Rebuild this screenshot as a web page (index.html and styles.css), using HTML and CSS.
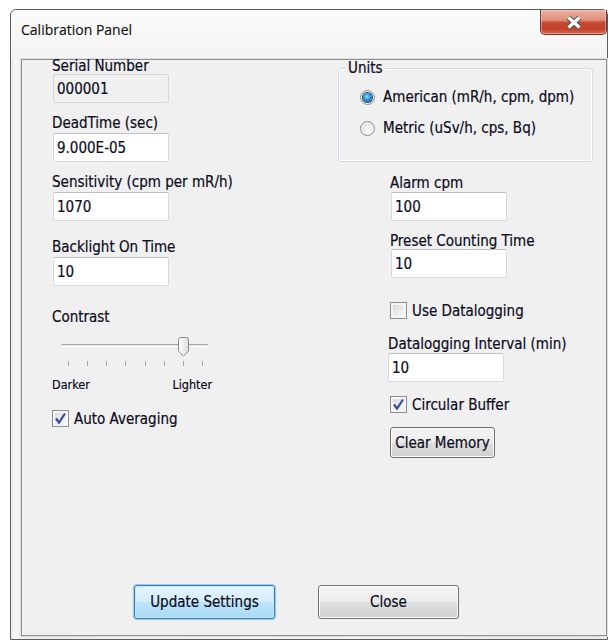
FILE: index.html
```html
<!DOCTYPE html>
<html>
<head>
<meta charset="utf-8">
<title>Calibration Panel</title>
<link rel="stylesheet" href="styles.css">
</head>
<body>
<div class="window">
  <div class="titlebar">
    <span class="title">Calibration Panel</span>
    <button class="close-x" type="button" aria-label="Close window">
      <svg width="20" height="15" viewBox="0 0 20 15">
        <path d="M4.5 2.5 L15.5 12.5 M15.5 2.5 L4.5 12.5" stroke="#4e4e4e" stroke-width="5.2" fill="none"/>
        <path d="M4.5 2.5 L15.5 12.5 M15.5 2.5 L4.5 12.5" stroke="#ffffff" stroke-width="3.2" fill="none"/>
      </svg>
    </button>
  </div>

  <div class="client">
    <div class="columns">
      <!-- left column: device settings -->
      <div class="col col-left">
        <div class="field f-serial">
          <label class="lbl">Serial Number</label>
          <input class="txt disabled" type="text" value="000001" readonly>
        </div>
        <div class="field f-dead">
          <label class="lbl">DeadTime (sec)</label>
          <input class="txt" type="text" value="9.000E-05">
        </div>
        <div class="field f-sens">
          <label class="lbl">Sensitivity (cpm per mR/h)</label>
          <input class="txt" type="text" value="1070">
        </div>
        <div class="field f-back">
          <label class="lbl">Backlight On Time</label>
          <input class="txt" type="text" value="10">
        </div>

        <div class="lbl contrast">Contrast</div>
        <div class="slider">
          <div class="track"></div>
          <svg class="thumb" width="11" height="20" viewBox="0 0 11 20">
            <defs>
              <linearGradient id="thumbFill" x1="0" y1="0" x2="1" y2="0">
                <stop offset="0" stop-color="#ffffff"/>
                <stop offset="1" stop-color="#dcdcdc"/>
              </linearGradient>
            </defs>
            <path d="M0.5 2.5 A2 2 0 0 1 2.5 0.5 H8.5 A2 2 0 0 1 10.5 2.5 V14 L5.5 19.2 L0.5 14 Z" fill="url(#thumbFill)" stroke="#8a8a8a"/>
          </svg>
          <div class="ticks"><i></i><i></i><i></i><i></i><i></i><i></i><i></i><i></i></div>
        </div>
        <div class="scale-labels"><span>Darker</span><span>Lighter</span></div>

        <label class="check-row cb-auto">
          <span class="check">
            <svg width="13" height="13" viewBox="0 0 13 13"><path d="M2 6.5 L5 10.5 L11 1.5" stroke="#3a4c9e" stroke-width="2.2" fill="none"/></svg>
          </span>
          <span>Auto Averaging</span>
        </label>
      </div>

      <!-- right column: units, alarm and logging -->
      <div class="col col-right">
        <fieldset class="group">
          <legend>Units</legend>
          <div class="radios">
            <label class="radio-row"><span class="radio on"></span><span>American (mR/h, cpm, dpm)</span></label>
            <label class="radio-row"><span class="radio"></span><span>Metric (uSv/h, cps, Bq)</span></label>
          </div>
        </fieldset>

        <div class="field f-alarm">
          <label class="lbl">Alarm cpm</label>
          <input class="txt" type="text" value="100">
        </div>
        <div class="field f-preset">
          <label class="lbl">Preset Counting Time</label>
          <input class="txt" type="text" value="10">
        </div>

        <label class="check-row cb-datalog">
          <span class="check"></span>
          <span>Use Datalogging</span>
        </label>

        <div class="field f-interval">
          <label class="lbl">Datalogging Interval (min)</label>
          <input class="txt" type="text" value="10">
        </div>

        <label class="check-row cb-circular">
          <span class="check">
            <svg width="13" height="13" viewBox="0 0 13 13"><path d="M2 6.5 L5 10.5 L11 1.5" stroke="#3a4c9e" stroke-width="2.2" fill="none"/></svg>
          </span>
          <span>Circular Buffer</span>
        </label>

        <button class="btn btn-clear" type="button">Clear Memory</button>
      </div>
    </div>

    <div class="actions">
      <button class="btn btn-wide default" type="button">Update Settings</button>
      <button class="btn btn-wide" type="button">Close</button>
    </div>
  </div>
</div>
</body>
</html>
```
FILE: styles.css
```css
* { box-sizing: border-box; }

html, body {
  margin: 0;
  padding: 0;
}

body {
  width: 608px;
  height: 640px;
  overflow: hidden;
  background: #ffffff;
  font-family: "DejaVu Sans Condensed", "DejaVu Sans", sans-serif;
  font-stretch: condensed;
  font-size: 15px;
  color: #0c0c1c;
  -webkit-text-stroke: 0.2px #0c0c1c;
}

/* window frame */
.window {
  margin: 9px 0 0 10px;
  width: 598px;
  height: 631px;
  border: 1px solid #5e5e5e;
  border-radius: 6px 6px 0 0;
  background: linear-gradient(90deg, #e9e9e9 0, #f7f7f7 4px, #eeeeee 10px, #f3f3f3 50%, #ececec 100%);
  display: flex;
  flex-direction: column;
}

.titlebar {
  height: 49px;
  flex: none;
  display: flex;
  justify-content: space-between;
  align-items: flex-start;
  background: linear-gradient(#fbfbfb, #f4f4f4);
  border-radius: 6px 6px 0 0;
}

.title {
  font-family: "Open Sans", sans-serif;
  font-stretch: normal;
  font-size: 14px;
  line-height: 16px;
  padding: 12px 0 0 10px;
  color: #111111;
  -webkit-text-stroke: 0.15px #111111;
}

.close-x {
  width: 67px;
  height: 25px;
  padding: 0;
  margin: 0;
  border: 1px solid #7d3427;
  border-top: none;
  border-radius: 0 0 5px 5px;
  background: linear-gradient(#ebb1a4 0%, #df8f7c 42%, #c94a33 52%, #c2402a 78%, #d8694e 100%);
  box-shadow: inset 0 0 0 1px rgba(255, 220, 210, 0.45);
  display: flex;
  align-items: center;
  justify-content: center;
}

/* client area */
.client {
  margin-left: 10px;
  width: 586px;
  height: 577px;
  flex: none;
  border: 1px solid #8f8f8f;
  box-shadow: 0 0 0 1px #dedede;
  background: #f0f0f0;
  display: flex;
  flex-direction: column;
}

.columns {
  display: flex;
  padding-left: 30px;
}

.col {
  display: flex;
  flex-direction: column;
  align-items: flex-start;
}

.col-left { width: 286px; }
.col-right { width: 255px; }

/* labels and text boxes */
.lbl {
  display: block;
  height: 16px;
  line-height: 16px;
  white-space: nowrap;
}

.field {
  display: flex;
  flex-direction: column;
  align-items: flex-start;
}

.txt {
  display: block;
  width: 116px;
  height: 29px;
  margin: 0 0 0 1px;
  padding: 0 0 0 3px;
  font: inherit;
  font-stretch: condensed;
  color: #0c0c1c;
  background: #ffffff;
  border: 1px solid #d6dae0;
  border-top-color: #bcc0c6;
  border-radius: 2px;
  outline: none;
}

.txt.disabled {
  background: #f0f0f0;
  border-color: #d9d9d9;
}

.f-serial { margin-top: -2px; }
.f-dead { margin-top: 12px; }
.f-sens { margin-top: 12px; }
.f-back { margin-top: 18px; }
.f-dead .txt,
.f-sens .txt,
.f-back .txt { margin-top: 2px; }

.contrast { margin-top: 23px; }

/* trackbar */
.slider {
  position: relative;
  margin: 19px 0 0 9px;
  width: 147px;
}

.track {
  height: 3px;
  border-top: 1px solid #a7a7a7;
  border-bottom: 1px solid #ffffff;
  background: #e3e3e3;
  border-radius: 1px;
}

.thumb {
  position: absolute;
  left: 117px;
  top: -7px;
}

.ticks {
  margin: 14px 0 0 7px;
  width: 135px;
  height: 5px;
  display: flex;
  justify-content: space-between;
}

.ticks i {
  width: 1px;
  height: 5px;
  background: #a9a9a9;
}

.scale-labels {
  margin-top: 12px;
  width: 160px;
  display: flex;
  justify-content: space-between;
  font-size: 12.5px;
  line-height: 14px;
}

/* check boxes */
.check-row {
  display: flex;
  align-items: center;
  gap: 5px;
  height: 17px;
  line-height: 16px;
  white-space: nowrap;
}

.check {
  width: 17px;
  height: 17px;
  border: 1px solid #8e8f8f;
  background: linear-gradient(135deg, #d2d4d8 0%, #eeeff0 60%, #fafafa 100%);
  box-shadow: inset 0 0 0 2px #f5f5f5;
  display: flex;
  align-items: center;
  justify-content: center;
}

.cb-auto { margin-top: 18px; }
.cb-datalog { margin: 24px 0 0 52px; }
.cb-circular { margin: 14px 0 0 52px; }

/* units group */
.group {
  width: 255px;
  margin: 0;
  padding: 13px 0 25px 0;
  border: 1px solid #d3dce2;
  border-radius: 3px;
  box-shadow: inset 0 0 0 1px #ffffff;
}

.group legend {
  margin-left: 7px;
  padding: 0 2px;
  line-height: 16px;
  background: #f0f0f0;
}

.radios {
  padding-left: 21px;
  display: flex;
  flex-direction: column;
  gap: 15px;
}

.radio-row {
  display: flex;
  align-items: center;
  gap: 8px;
  height: 16px;
  white-space: nowrap;
}

.radio {
  position: relative;
  width: 15px;
  height: 15px;
  border-radius: 50%;
  border: 1px solid #8e8f8f;
  background: radial-gradient(circle at 60% 65%, #fbfbfb 0%, #e6e6e6 55%, #cfcfcf 100%);
  box-shadow: inset 0 0 0 1px #f6f6f6;
}

.radio.on::after {
  content: "";
  position: absolute;
  left: 2px;
  top: 2px;
  width: 9px;
  height: 9px;
  border-radius: 50%;
  background: radial-gradient(circle at 45% 40%, #9be0ff 0%, #2d8fd0 45%, #0d4f86 100%);
  box-shadow: 0 0 0 1px #1c4a72;
}

.f-alarm { margin: 13px 0 0 52px; }
.f-alarm .txt { margin-top: 1px; }
.f-preset { margin: 12px 0 0 52px; }
.f-interval { margin: 17px 0 0 50px; }
.f-interval .txt { margin-top: 1px; margin-left: 0; }

/* push buttons */
.btn {
  font: inherit;
  font-stretch: condensed;
  color: #0c0c1c;
  padding: 0;
  border: 1px solid #707070;
  border-radius: 3px;
  background: linear-gradient(#f4f4f4 0%, #ececec 48%, #dedede 52%, #d1d1d1 100%);
  box-shadow: inset 0 0 0 1px #fbfbfb;
}

.btn.default {
  border-color: #3c7fb1;
  background: linear-gradient(#e6f4fc 0%, #d6eefb 48%, #bde4fa 52%, #a9d9f4 100%);
  box-shadow: inset 0 0 0 1px #c5e6f8, 0 0 1px 1px #8ec6ea;
}

.btn-clear {
  margin: 14px 0 0 52px;
  width: 105px;
  height: 31px;
}

.actions {
  margin-top: auto;
  display: flex;
  gap: 43px;
  padding: 0 0 16px 112px;
}

.btn-wide {
  width: 141px;
  height: 34px;
}
```
